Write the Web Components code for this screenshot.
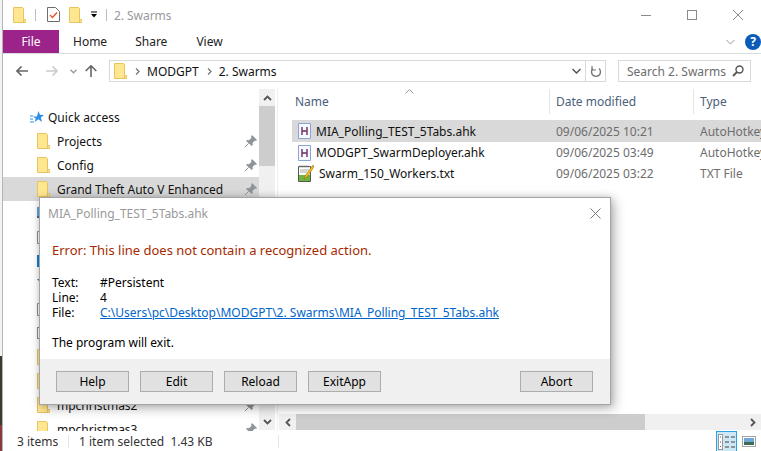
<!DOCTYPE html>
<html lang="en">
<head>
<meta charset="utf-8">
<title>2. Swarms</title>
<style>
  html, body { margin: 0; height: 100%; background: #fff; overflow: hidden; }
  body { font: 12px "Noto Sans", "Open Sans", sans-serif; color: #000; }
</style>
</head>
<body>
<explorer-window>
  <title-bar slot="top"></title-bar>
  <ribbon-tabs slot="top"></ribbon-tabs>
  <address-row slot="top"></address-row>
  <nav-pane slot="left">
    <nav-row icon="star" head>Quick access</nav-row>
    <nav-row icon="folder" pin>Projects</nav-row>
    <nav-row icon="folder" pin>Config</nav-row>
    <nav-row icon="folder" pin selected>Grand Theft Auto V Enhanced</nav-row>
    <nav-row icon="desk"></nav-row>
    <nav-row icon="doc"></nav-row>
    <nav-row icon="down"></nav-row>
    <nav-row icon="tri"></nav-row>
    <nav-row icon="doc"></nav-row>
    <nav-row icon="pic"></nav-row>
    <nav-row icon="folder"></nav-row>
    <nav-row icon="folder"></nav-row>
    <nav-row icon="folder" pin>mpchristmas2</nav-row>
    <nav-row icon="folder" pin>mpchristmas3</nav-row>
  </nav-pane>
  <file-list slot="main">
    <file-row icon="ahk" date="09/06/2025 10:21" type="AutoHotkey Script" selected>MIA_Polling_TEST_5Tabs.ahk</file-row>
    <file-row icon="ahk" date="09/06/2025 03:49" type="AutoHotkey Script">MODGPT_SwarmDeployer.ahk</file-row>
    <file-row icon="txt" date="09/06/2025 03:22" type="TXT File">Swarm_150_Workers.txt</file-row>
  </file-list>
  <status-bar slot="bottom"></status-bar>
</explorer-window>

<error-dialog caption="MIA_Polling_TEST_5Tabs.ahk">
  <span slot="error">Error: This line does not contain a recognized action.</span>
  <span slot="text">#Persistent</span>
  <span slot="line">4</span>
  <span slot="file">C:\Users\pc\Desktop\MODGPT\2. Swarms\MIA_Polling_TEST_5Tabs.ahk</span>
  <span slot="note">The program will exit.</span>
  <dialog-button slot="buttons">Help</dialog-button>
  <dialog-button slot="buttons">Edit</dialog-button>
  <dialog-button slot="buttons">Reload</dialog-button>
  <dialog-button slot="buttons">ExitApp</dialog-button>
  <dialog-button slot="buttons" class="abort">Abort</dialog-button>
</error-dialog>

<script>
const FONT = '"Noto Sans", "Open Sans", sans-serif';

// every icon used on the page, drawn on its own viewBox
const ICONS = {
    folder: `<svg width="13" height="16" viewBox="0 0 13 16"><path d="M.5.5h9l1 1v11h2v3H.5z" fill="#ffe792" stroke="#e7c45f"/><path d="M10.5 12.5v3" stroke="#e7c45f"/></svg>`,
    star: `<svg width="14" height="13" viewBox="0 0 14 13"><path d="M8.5 0l1.4 3.8L14 4l-3.2 2.5L12 11 8.300 8.300 4.700 11l1-3.500L3 5.500h3.900z" fill="#2b8fe8"/><path d="M0 5h3M0 8h3M0 11h4" stroke="#2b8fe8" stroke-width="1.200"/></svg>`,
    pin: `<svg width="12" height="12" viewBox="0 0 12 12"><path d="M7 0l5 5-1 1-1-.500-2.500 2.500.3 2-1 1L1 6l1-1 2 .3L6.500 2.800 6 1.800z" fill="#8f9499"/><path d="M3.500 8.500L0 12" stroke="#8f9499"/></svg>`,
    desk: `<svg width="13" height="12" viewBox="0 0 13 12"><rect width="13" height="9" fill="#5ea5e0"/><rect y="9" width="13" height="2" fill="#3d6e9c"/></svg>`,
    doc: `<svg width="11" height="13" viewBox="0 0 11 13"><path d="M.5.500h10v12H.5z" fill="#fff" stroke="#8c8c8c"/></svg>`,
    down: `<svg width="13" height="12" viewBox="0 0 13 12"><rect width="13" height="12" fill="#0f7fdc"/></svg>`,
    tri: `<svg width="13" height="12" viewBox="0 0 13 12"><path d="M0 0h13L6.500 7z" fill="#2b78c2"/></svg>`,
    pic: `<svg width="12" height="12" viewBox="0 0 12 12"><rect x=".5" y=".5" width="11" height="11" fill="#fff" stroke="#8c8c8c"/><rect x="2" y="2" width="8" height="4" fill="#4d9ad0"/><rect x="2" y="6" width="8" height="4" fill="#4c6e50"/></svg>`,
    ahk: `<svg width="13" height="16" viewBox="0 0 13 16"><path d="M.5.500h12v15H.5z" fill="#f5f8ff" stroke="#8fa2d6"/><path d="M4 4v8M9 4v8M4 8h5" stroke="#6d2e5f" stroke-width="1.400" fill="none"/></svg>`,
    txt: `<svg width="16" height="17" viewBox="0 0 16 17"><path d="M.5 1.500h12v15H.5z" fill="#fff" stroke="#555"/><path d="M2 .5v2M4 .5v2M6 .5v2M8 .5v2M10 .5v2" stroke="#777"/><path d="M1 10h11v6H1z" fill="#6fb53c"/><path d="M2 5h9M2 7h7" stroke="#aaa"/><path d="M15 0L7 11l-1 3 3-2 7-10z" fill="#f2c21a" stroke="#8a5b12" stroke-width=".5"/></svg>`,
    check: `<svg width="13" height="15" viewBox="0 0 13 15"><path d="M.5.500h8l4 4v10H.5z" fill="#fff" stroke="#6d6d6d"/><path d="M3 8l2.500 2.500L10 5.500" stroke="#e4572e" stroke-width="1.400" fill="none"/></svg>`
};

function define(name, html, setup) {
    customElements.define(name, class extends HTMLElement {
        constructor() {
            super();
            this.attachShadow({ mode: "open" });
        }
        connectedCallback() {
            this.shadowRoot.innerHTML = typeof html === "function" ? html(this) : html;
            if (setup) setup(this);
        }
    });
}

define("explorer-window", `
    <style>
        :host { display: grid; grid-template-columns: 3px 1fr; width: 761px; height: 451px; background: #fff; }
        .edge { background: linear-gradient(#f3f3f3 0 356px, #3b3a2c 356px 425px, #8a3a3a 425px); border-right: 1px solid #b5b5b5; width: 2px; }
        .win { display: flex; flex-direction: column; min-width: 0; }
        .body { display: flex; flex: 1; min-height: 0; }
    </style>
    <div class="edge"></div>
    <div class="win">
        <slot name="top"></slot>
        <div class="body"><slot name="left"></slot><slot name="main"></slot></div>
        <slot name="bottom"></slot>
    </div>`);

define("title-bar", `
    <style>
        :host { display: flex; align-items: center; height: 30px; padding-left: 10px; font-family: ${FONT}; font-size: 12px; color: #999; }
        .sep { width: 1px; height: 12px; background: #bcbcbc; }
        .qa { display: flex; align-items: center; }
        .caption { margin-left: 7px; letter-spacing: -.05px; }
        .controls { margin-left: auto; display: flex; align-items: center; gap: 0; }
        .controls span { width: 46px; display: flex; justify-content: center; }
    </style>
    <div class="qa" style="margin-top:-1px">
        ${ICONS.folder}
        <div class="sep" style="margin:0 11px 0 9px"></div>
        ${ICONS.check}
        <span style="width:9px"></span>
        ${ICONS.folder}
        <svg width="8" height="8" viewBox="0 0 8 8" style="margin:0 8px 0 8px"><path d="M1 1h6" stroke="#000"/><path d="M1 3h6L4 6.500z"/></svg>
    </div>
    <div class="sep"></div>
    <span class="caption">2. Swarms</span>
    <div class="controls">
        <span><svg width="10" height="10"><path d="M0 5.500h10" stroke="#8a8a8a"/></svg></span>
        <span><svg width="10" height="10"><rect x=".5" y=".5" width="9" height="9" fill="none" stroke="#8a8a8a"/></svg></span>
        <span><svg width="10" height="10"><path d="M0 0l10 10M10 0L0 10" stroke="#8a8a8a"/></svg></span>
    </div>`);

define("ribbon-tabs", `
    <style>
        :host { display: flex; align-items: stretch; height: 23px; border-bottom: 1px solid #dadbdc; font-family: ${FONT}; font-size: 12px; color: #222; }
        .file { width: 56px; background: #9b2389; color: #fff; display: flex; align-items: center; justify-content: center; }
        .tab { display: flex; align-items: center; }
        .right { margin-left: auto; display: flex; align-items: center; padding-right: 0; gap: 10px; }
        .help { width: 16px; height: 16px; border-radius: 50%; background: #0a5cb8; color: #fff; font-size: 12px; font-weight: 700; display: flex; align-items: center; justify-content: center; margin-right: 0; }
    </style>
    <div class="file">File</div>
    <div class="tab" style="margin-left:14px">Home</div>
    <div class="tab" style="margin-left:28px">Share</div>
    <div class="tab" style="margin-left:29px">View</div>
    <div class="right">
        <svg width="9" height="6" viewBox="0 0 9 6"><path d="M.5 1L4.500 5 8.500 1" stroke="#999" fill="none"/></svg>
        <div class="help">?</div>
    </div>`);

define("address-row", `
    <style>
        :host { display: flex; align-items: center; height: 22px; padding: 6px 10px 6px 0; font-family: ${FONT}; font-size: 12px; color: #111; }
        .nav { display: flex; align-items: center; width: 106px; flex: none; }
        .box { height: 22px; box-sizing: border-box; border: 1px solid #d9d9d9; display: flex; align-items: center; }
        .addr { width: 497px; padding-left: 4px; }
        .search { width: 133px; margin-left: 12px; padding: 0 6px 0 8px; color: #6d6d6d; justify-content: space-between; }
        .chev { margin: 0 7px 0 8px; }
        .refresh { margin-left: auto; display: flex; align-items: center; height: 100%; }
        .refresh i { display: block; width: 1px; height: 100%; background: #d9d9d9; margin: 0 4px 0 4px; }
    </style>
    <div class="nav">
        <svg style="margin-left:13px" width="12" height="10" viewBox="0 0 12 10"><path d="M5.500 .5L1 5l4.500 4.500M1.500 5H12" stroke="#666" stroke-width="1.600" fill="none"/></svg>
        <svg style="margin-left:18px" width="12" height="10" viewBox="0 0 12 10"><path d="M6.500 .5L11 5l-4.500 4.500M0 5h10.500" stroke="#ccc" stroke-width="1.600" fill="none"/></svg>
        <svg style="margin-left:12px" width="7" height="5" viewBox="0 0 7 5"><path d="M.5 .8L3.500 3.800 6.500 .8" stroke="#999" stroke-width="1.300" fill="none"/></svg>
        <svg style="margin-left:8px" width="12" height="12" viewBox="0 0 12 12"><path d="M.7 6L6 .8 11.300 6M6 1v11" stroke="#666" stroke-width="1.600" fill="none"/></svg>
    </div>
    <div class="box addr">
        ${ICONS.folder}
        <svg class="chev" width="5" height="7" viewBox="0 0 5 7"><path d="M1 .5l3 3-3 3" stroke="#777" stroke-width="1.300" fill="none"/></svg>
        <span>MODGPT</span>
        <svg class="chev" width="5" height="7" viewBox="0 0 5 7"><path d="M1 .5l3 3-3 3" stroke="#777" stroke-width="1.300" fill="none"/></svg>
        <span>2. Swarms</span>
        <div class="refresh">
            <svg width="9" height="6" viewBox="0 0 9 6"><path d="M.5 1l4 4 4-4" stroke="#555" stroke-width="1.500" fill="none"/></svg>
            <i></i>
            <svg width="12" height="13" viewBox="0 0 12 13" style="margin-right:3px"><path d="M3 3.500A4.500 4.500 0 1 0 9 3.500" stroke="#777" stroke-width="1.400" fill="none"/><path d="M2 1v4h4" stroke="#777" stroke-width="1.200" fill="none"/></svg>
        </div>
    </div>
    <div class="box search">
        <span>Search 2. Swarms</span>
        <svg width="12" height="12" viewBox="0 0 12 12"><circle cx="7.500" cy="4.500" r="3.500" fill="none" stroke="#555" stroke-width="1.400"/><path d="M5 7L1 11" stroke="#555" stroke-width="1.800"/></svg>
    </div>`);

define("nav-pane", `
    <style>
        :host { display: flex; width: 272px; flex: none; height: 100%; overflow: hidden; }
        .rows { width: 256px; height: 343px; padding-top: 17px; box-sizing: border-box; overflow: hidden; }
        .bar { width: 16px; height: 341px; margin-top: 1px; background: #f0f0f0; display: flex; flex-direction: column; align-items: center; }
        .btn { height: 17px; display: flex; align-items: center; justify-content: center; }
        .thumb { width: 16px; height: 60px; background: #cdcdcd; }
        .gap { flex: 1; }
    </style>
    <div class="rows"><slot></slot></div>
    <div class="bar">
        <div class="btn"><svg width="9" height="6" viewBox="0 0 9 6"><path d="M1 5l3.500-3.500L8 5" stroke="#555" stroke-width="1.800" fill="none"/></svg></div>
        <div class="thumb"></div>
        <div class="gap"></div>
        <div class="btn"><svg width="9" height="6" viewBox="0 0 9 6"><path d="M1 1l3.500 3.500L8 1" stroke="#555" stroke-width="1.800" fill="none"/></svg></div>
    </div>`);

define("nav-row", el => `
    <style>
        :host { display: flex; align-items: center; height: 24px; position: relative; font-family: ${FONT}; font-size: 12px; color: #111; padding-left: 34px; }
        :host([selected]) { background: #d9d9d9; }
        :host([head]) { padding-left: 27px; }
        .label { margin-left: 7px; white-space: nowrap; }
        :host([head]) .label { margin-left: 4px; }
        .pin { margin-left: auto; margin-right: 2px; display: flex; }
    </style>
    ${ICONS[el.getAttribute("icon")]}
    <span class="label"><slot></slot></span>
    ${el.hasAttribute("pin") ? `<span class="pin">${ICONS.pin}</span>` : ""}`);

define("file-list", `
    <style>
        :host { display: flex; flex-direction: column; flex: 1; min-width: 0; height: 343px; border-left: 1px solid #f0f0f0; margin-left: 2px; font-family: ${FONT}; font-size: 12px; overflow: hidden; }
        .head { display: grid; grid-template-columns: 257px 144px 1fr; height: 25px; margin: 1px 0 6px 14px; color: #4c607a; position: relative; }
        .head span { display: flex; align-items: center; padding-left: 3px; box-sizing: border-box; }
        .head span + span { border-left: 1px solid #e5e5e5; padding-left: 6px; }
        .sort { position: absolute; left: 113px; top: 0; }
        .rows { flex: 1; margin-left: 14px; }
        .hbar { height: 16px; margin-bottom: 1px; background: #f0f0f0; margin-left: 1px; display: flex; align-items: center; }
        .hbtn { width: 17px; height: 16px; display: flex; align-items: center; justify-content: center; flex: none; }
        .hthumb { width: 349px; height: 16px; background: #cdcdcd; }
        .hgap { flex: 1; }
    </style>
    <div class="head">
        <span>Name</span><span>Date modified</span><span>Type</span>
        <svg class="sort" width="9" height="5" viewBox="0 0 9 5"><path d="M.5 4.500l4-4 4 4" stroke="#999" fill="none"/></svg>
    </div>
    <div class="rows"><slot></slot></div>
    <div class="hbar">
        <div class="hbtn"><svg width="6" height="9" viewBox="0 0 6 9"><path d="M5 1L1.500 4.500 5 8" stroke="#555" stroke-width="1.800" fill="none"/></svg></div>
        <div class="hthumb"></div>
        <div class="hgap"></div>
        <div class="hbtn"><svg width="6" height="9" viewBox="0 0 6 9"><path d="M1 1l3.500 3.500L1 8" stroke="#555" stroke-width="1.800" fill="none"/></svg></div>
    </div>`);

define("file-row", el => `
    <style>
        :host { display: grid; grid-template-columns: 264px 144px 1fr; align-items: center; height: 21px; font-family: ${FONT}; font-size: 12px; color: #111; white-space: nowrap; overflow: hidden; }
        :host([selected]) { background: #d9d9d9; height: 22px; }
        .name { display: flex; align-items: center; padding-left: 6px; }
        .name svg { flex: none; margin-right: 5px; }
        .meta { color: #6d6d6d; }
    </style>
    <div class="name">${ICONS[el.getAttribute("icon")]}<slot></slot></div>
    <div class="meta">${el.getAttribute("date")}</div>
    <div class="meta">${el.getAttribute("type")}</div>`);

define("status-bar", `
    <style>
        :host { display: flex; align-items: center; height: 20px; font-family: ${FONT}; font-size: 12px; color: #333; position: relative; }
        .cell { display: flex; align-items: center; height: 13px; }
        .views { margin-left: auto; display: flex; align-items: center; }
        .on { width: 21px; height: 20px; box-sizing: border-box; border: 1px solid #2ba3df; background: #cce8f6; border-bottom: 0; display: flex; align-items: center; justify-content: center; }
    </style>
    <div class="cell" style="padding-left:14px;width:51px;border-right:1px solid #e5e5e5">3 items</div>
    <div class="cell" style="padding-left:10px;width:199px;border-right:1px solid #e5e5e5">1 item selected&nbsp; 1.43 KB</div>
    <div class="views">
        <div class="on"><svg width="17" height="16" viewBox="0 0 17 16"><rect x=".5" y=".5" width="4" height="15" fill="#fff" stroke="#999"/><path d="M2 3h1M2 8h1" stroke="#555"/><path d="M2 12.500h1" stroke="#b3413a"/><path d="M7 3h4M13 3h4M7 8h4M13 8h4M7 13h4M13 13h4" stroke="#777" stroke-width="1.300"/></svg></div>
        <svg style="margin:0 5px 0 5px" width="14" height="11" viewBox="0 0 14 11"><rect x=".5" y=".5" width="13" height="10" fill="#fff" stroke="#a3a3a3"/><rect x="2" y="2" width="10" height="4" fill="#6ea8d8"/><rect x="2" y="6" width="10" height="3" fill="#3f6b55"/></svg>
    </div>`);

define("error-dialog", el => `
    <style>
        :host { display: flex; flex-direction: column; position: absolute; left: 39px; top: 197px; width: 572px; height: 208px; box-sizing: border-box; background: #fff; border: 1px solid #a4a4a4; box-shadow: 3px 3px 11px rgba(0,0,0,.3), 0 0 6px rgba(0,0,0,.12); font-family: ${FONT}; font-size: 12px; color: #000; }
        .cap { display: flex; align-items: center; justify-content: space-between; height: 30px; padding: 0 9px 0 8px; color: #999; flex: none; }
        .main { flex: 1; padding: 13px 12px 0; }
        .err { font-size: 13px; line-height: 18px; color: #a52a00; }
        .info { display: grid; grid-template-columns: 48px 1fr; grid-auto-rows: 15px; line-height: 15px; margin-top: 16px; }
        .info a { color: #0066cc; text-decoration: underline; }
        .note { margin-top: 15px; line-height: 15px; }
        .foot { display: flex; gap: 11px; height: 45px; box-sizing: border-box; background: #f0f0f0; padding: 12px 17px 0 16px; flex: none; }
        ::slotted(.abort) { margin-left: auto; }
    </style>
    <div class="cap">
        <span>${el.getAttribute("caption")}</span>
        <svg width="11" height="11"><path d="M.5 .5l10 10M10.500 .5l-10 10" stroke="#777"/></svg>
    </div>
    <div class="main">
        <div class="err"><slot name="error"></slot></div>
        <div class="info">
            <span>Text:</span><span><slot name="text"></slot></span>
            <span>Line:</span><span><slot name="line"></slot></span>
            <span>File:</span><a><slot name="file"></slot></a>
        </div>
        <div class="note"><slot name="note"></slot></div>
    </div>
    <div class="foot"><slot name="buttons"></slot></div>`);

define("dialog-button", `
    <style>
        :host { display: flex; align-items: center; justify-content: center; width: 73px; height: 21px; box-sizing: border-box; background: #e1e1e1; border: 1px solid #adadad; font-family: ${FONT}; font-size: 12px; color: #000; }
    </style>
    <slot></slot>`);
</script>
</body>
</html>
